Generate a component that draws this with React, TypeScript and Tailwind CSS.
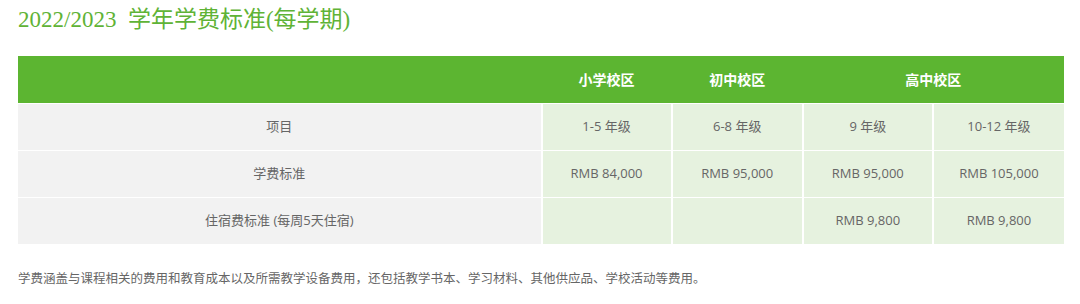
const font = { fontFamily: '"Open Sans", "Noto Sans CJK SC", sans-serif' };

const rows = [
  { label: '项目', cells: ['1-5 年级', '6-8 年级', '9 年级', '10-12 年级'] },
  { label: '学费标准', cells: ['RMB 84,000', 'RMB 95,000', 'RMB 95,000', 'RMB 105,000'] },
  { label: '住宿费标准 (每周5天住宿)', cells: ['', '', 'RMB 9,800', 'RMB 9,800'] },
];

export default function App() {
  return (
    <div className="h-[304px] w-[1080px] bg-white pl-[18px] pt-[5px]" style={font}>
      <h2
        className="text-[23px] leading-[30px] text-[#5fb336]"
        style={{ fontFamily: '"Liberation Serif", "Noto Sans CJK SC", serif' }}
      >
        2022/2023&nbsp;&nbsp;学年学费标准(每学期)
      </h2>
      <table className="mt-[21px] w-[1046px] table-fixed border-collapse text-[13px] text-[#666]">
        <colgroup>
          <col className="w-[523px]" />
          <col className="w-[130px]" />
          <col className="w-[131px]" />
          <col className="w-[130px]" />
          <col className="w-[131px]" />
        </colgroup>
        <thead>
          <tr className="h-[47px] bg-[#5cb531] text-[14px] font-bold text-white">
            <th />
            <th>小学校区</th>
            <th>初中校区</th>
            <th colSpan={2}>高中校区</th>
          </tr>
        </thead>
        <tbody>
          {rows.map(r => (
            <tr key={r.label} className="h-[47px]">
              <td className="border-t border-white bg-[#f2f2f2] text-center">{r.label}</td>
              {r.cells.map((c, i) => (
                <td key={i} className="border-l-2 border-t border-white bg-[#e6f2df] text-center">
                  {c}
                </td>
              ))}
            </tr>
          ))}
        </tbody>
      </table>
      <p className="mt-[26px] text-[12.5px] text-[#666]">
        学费涵盖与课程相关的费用和教育成本以及所需教学设备费用，还包括教学书本、学习材料、其他供应品、学校活动等费用。
      </p>
    </div>
  );
}
